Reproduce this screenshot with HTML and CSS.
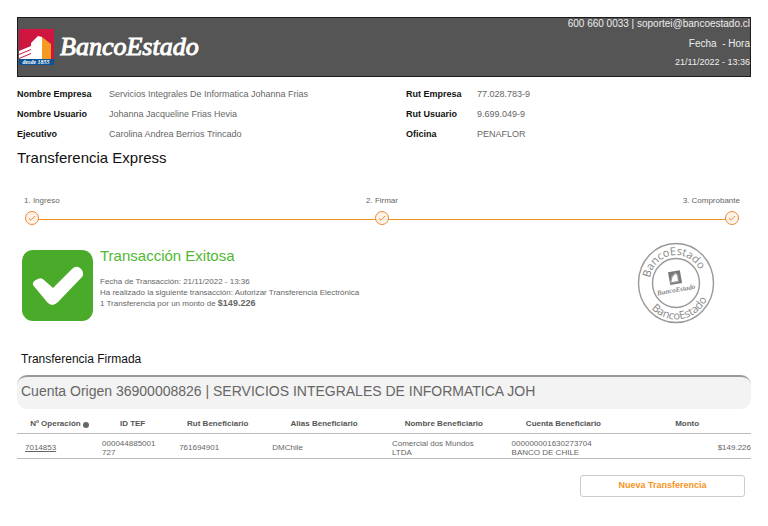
FILE: index.html
```html
<!DOCTYPE html>
<html lang="es">
<head>
	<meta charset="UTF-8">
	<meta name="viewport" content="width=device-width, initial-scale=1">
	<title>Transferencia Express</title>
	<link rel="stylesheet" href="styles.css">
</head>
<body>
	<header class="header">
		<div class="brand">
			<svg class="brandIcon" viewBox="0 0 35 36" aria-hidden="true">
				<rect width="35" height="36" fill="#cf1640"/>
				<path d="M12 31V14L19 7L23 8V31z" fill="#fff"/>
				<path d="M0 22L12 17V20L0 25zM0 26L12 21V24L0 29zM0 30L12 25V31H0z" fill="#fff"/>
				<path d="M23 8L32 15V31H23z" fill="#f59a23"/>
				<rect y="30" width="35" height="6" fill="#0b5394"/>
				<text x="17" y="35" class="brandYear">desde 1855</text>
			</svg>
			<span class="brandName">BancoEstado</span>
		</div>
		<div class="contact">
			<p class="phone">600 660 0033 | soportei@bancoestado.cl</p>
			<p>Fecha &nbsp;- Hora</p>
			<p class="date">21/11/2022 - 13:36</p>
		</div>
	</header>

	<div class="info">
		<dl>
			<dt>Nombre Empresa</dt><dd>Servicios Integrales De Informatica Johanna Frias</dd>
			<dt>Nombre Usuario</dt><dd>Johanna Jacqueline Frias Hevia</dd>
			<dt>Ejecutivo</dt><dd>Carolina Andrea Berrios Trincado</dd>
		</dl>
		<dl class="ruts">
			<dt>Rut Empresa</dt><dd>77.028.783-9</dd>
			<dt>Rut Usuario</dt><dd>9.699.049-9</dd>
			<dt>Oficina</dt><dd>PENAFLOR</dd>
		</dl>
	</div>

	<h1>Transferencia Express</h1>

	<ol class="steps">
		<li>
			<span>1. Ingreso</span>
			<svg class="stepIcon" viewBox="0 0 16 16"><circle cx="8" cy="8" r="6.5"/><path d="M4.8 8.2L7 10.2L11.2 6"/></svg>
		</li>
		<li>
			<span>2. Firmar</span>
			<svg class="stepIcon" viewBox="0 0 16 16"><circle cx="8" cy="8" r="6.5"/><path d="M4.8 8.2L7 10.2L11.2 6"/></svg>
		</li>
		<li>
			<span>3. Comprobante</span>
			<svg class="stepIcon" viewBox="0 0 16 16"><circle cx="8" cy="8" r="6.5"/><path d="M4.8 8.2L7 10.2L11.2 6"/></svg>
		</li>
	</ol>

	<section class="result">
		<svg class="okIcon" viewBox="0 0 71 71" aria-hidden="true">
			<rect width="71" height="71" rx="11" fill="#4aab2b"/>
			<path d="M11 35Q10 31 16 29Q19 27 22 30L31 38L50 19Q54 15 58 18Q63 22 60 27L36 52Q30 58 25 52z" fill="#fff"/>
		</svg>
		<div class="resultText">
			<h2>Transacción Exitosa</h2>
			<p>Fecha de Transacción: 21/11/2022 - 13:36</p>
			<p>Ha realizado la siguiente transacción: Autorizar Transferencia Electrónica</p>
			<p>1 Transferencia por un monto de <b>$149.226</b></p>
		</div>
		<svg class="stamp" viewBox="0 0 78 82">
			<ellipse cx="39" cy="41" rx="37.5" ry="39.5"/>
			<ellipse cx="39" cy="41" rx="23.5" ry="24.5"/>
			<path id="arcTop" class="arc" d="M12.5 41A26.5 28 0 0 1 65.500 41"/>
			<path id="arcBottom" class="arc" d="M4.500 41A34.500 36.500 0 0 0 73.500 41"/>
			<text class="ring"><textPath href="#arcTop" startOffset="45%">BancoEstado</textPath></text>
			<text class="ring"><textPath href="#arcBottom" startOffset="55%">BancoEstado</textPath></text>
			<g transform="rotate(-10 39 41)">
				<rect class="mark" x="33" y="29" width="12" height="13"/>
				<path d="M34 39L36 34L40 31L42 33V40H34z" fill="#fff"/>
				<text x="38" y="50" class="seal">BancoEstado</text>
			</g>
		</svg>
	</section>

	<h3>Transferencia Firmada</h3>
	<div class="account">Cuenta Origen 36900008826 | SERVICIOS INTEGRALES DE INFORMATICA JOH</div>

	<table>
		<colgroup>
			<col class="cOp"><col class="cTef"><col class="cRut"><col class="cAlias"><col class="cName"><col class="cAccount"><col class="cAmount">
		</colgroup>
		<thead>
			<tr>
				<th class="op">Nº Operación <span class="dot"></span></th>
				<th>ID TEF</th>
				<th>Rut Beneficiario</th>
				<th>Alias Beneficiario</th>
				<th>Nombre Beneficiario</th>
				<th>Cuenta Beneficiario</th>
				<th>Monto</th>
			</tr>
		</thead>
		<tbody>
			<tr>
				<td><a href="#">7014853</a></td>
				<td>000044885001<br>727</td>
				<td>761694901</td>
				<td>DMChile</td>
				<td>Comercial dos Mundos<br>LTDA</td>
				<td>000000001630273704<br>BANCO DE CHILE</td>
				<td class="amount">$149.226</td>
			</tr>
		</tbody>
	</table>

	<div class="actions">
		<button type="button">Nueva Transferencia</button>
	</div>
</body>
</html>
```
FILE: styles.css
```css
*{
	margin: 0;
	padding: 0;
	box-sizing: border-box;
}

body{
	padding: 17px;
	background: #fff;
	color: #666;
	font-family: "Liberation Sans", Arial, sans-serif;
	font-size: 8px;
	line-height: 11px;
}

.header{
	display: flex;
	justify-content: space-between;
	height: 60px;
	background: #555;
	border: 1px solid #1c1c1c;
}

.brand{
	display: flex;
	align-items: center;
	padding-left: 1px;
}
.brandIcon{
	width: 35px;
	height: 36px;
}
.brandYear{
	fill: #fff;
	font-family: "Liberation Serif", serif;
	font-size: 6px;
	font-style: italic;
	font-weight: bold;
	text-anchor: middle;
}
.brandName{
	margin-left: 6px;
	color: #fff;
	font-family: "Liberation Serif", serif;
	font-size: 26px;
	font-style: italic;
	line-height: 36px;
	-webkit-text-stroke: 1px #fff;
}

.contact{
	color: #eee;
	font-size: 10px;
	line-height: 18px;
	text-align: right;
}
.contact .phone{
	margin-bottom: 5px;
	line-height: 12px;
}
.contact .date{
	font-size: 9px;
}

.info{
	display: grid;
	grid-template-columns: 53% 47%;
	padding-top: 7px;
	font-size: 9px;
	line-height: 20px;
}
.info dl{
	display: grid;
	grid-template-columns: 92px 1fr;
}
.info .ruts{
	grid-template-columns: 71px 1fr;
}
.info dt{
	color: #111;
	font-weight: bold;
}

h1{
	color: #111;
	font-size: 15px;
	font-weight: normal;
	line-height: 28px;
}

.steps{
	display: grid;
	grid-template-columns: 1fr 1fr 1fr;
	position: relative;
	margin: 23px 11px 0 7px;
	list-style: none;
}
/* linea entre los pasos */
.steps:before{
	content: "";
	position: absolute;
	left: 8px;
	right: 8px;
	bottom: 6px;
	border-top: 1px solid #f0901e;
}
.steps li{
	display: flex;
	flex-direction: column;
	align-items: flex-start;
	gap: 4px;
	position: relative;
}
.steps li:nth-child(2){
	align-items: center;
}
.steps li:nth-child(3){
	align-items: flex-end;
}
.stepIcon{
	width: 16px;
	height: 16px;
	fill: #fff3e8;
	stroke: #e88b3a;
}
.stepIcon path{
	fill: none;
}

.result{
	display: flex;
	margin-top: 16px;
	padding: 0 36px 0 5px;
}
.okIcon{
	width: 71px;
	height: 71px;
	margin-top: 8px;
}
.resultText{
	flex: 1;
	padding-left: 7px;
}
.resultText h2{
	margin-bottom: 8px;
	padding-top: 2px;
	color: #4fb832;
	font-size: 15px;
	font-weight: normal;
	line-height: 24px;
}
.resultText b{
	font-size: 9px;
}

.stamp{
	width: 78px;
	height: 82px;
	fill: none;
	stroke: #999;
	stroke-width: 1.4;
}
.stamp .arc{
	stroke: none;
}
.stamp text{
	fill: #888;
	stroke: none;
	text-anchor: middle;
}
.stamp .ring{
	font-family: "Open Sans", sans-serif;
	font-size: 11px;
}
.stamp .seal{
	font-family: "Liberation Serif", serif;
	font-size: 7px;
	font-style: italic;
	font-weight: bold;
}
.stamp .mark{
	fill: #777;
	stroke: none;
}

h3{
	margin-top: 24px;
	padding-left: 4px;
	color: #111;
	font-size: 12px;
	font-weight: normal;
	line-height: 22px;
}

.account{
	margin-top: 5px;
	padding: 0 4px 4px;
	background: #f3f3f3;
	border-top: 2px solid #999;
	border-radius: 10px;
	font-size: 14px;
	line-height: 28px;
}

table{
	width: 100%;
	margin-top: 6px;
	border-collapse: collapse;
	table-layout: fixed;
}
.cOp,
.cTef{
	width: 10.5%;
}
.cRut{
	width: 12.7%;
}
.cAlias,
.cName,
.cAccount{
	width: 16.3%;
}
th{
	color: #555;
	font-size: 8px;
	line-height: 18px;
	white-space: nowrap;
}
th.op{
	padding-left: 8px;
}
td{
	height: 25px;
	padding: 3px 0 0 8px;
	line-height: 9px;
}
tr{
	border-bottom: 1px solid #bbb;
}
td a{
	color: #666;
}
.amount{
	text-align: right;
}
.dot{
	display: inline-block;
	width: 6px;
	height: 6px;
	background: #666;
	border-radius: 50%;
	vertical-align: -2px;
}

.actions{
	display: flex;
	justify-content: flex-end;
	padding: 16px 6px 0;
}
.actions button{
	width: 165px;
	height: 22px;
	padding-bottom: 2px;
	background: #fff;
	border: 1px solid #ccc;
	border-radius: 3px;
	color: #f7921e;
	font-family: inherit;
	font-size: 9px;
	font-weight: bold;
	cursor: pointer;
}
```
